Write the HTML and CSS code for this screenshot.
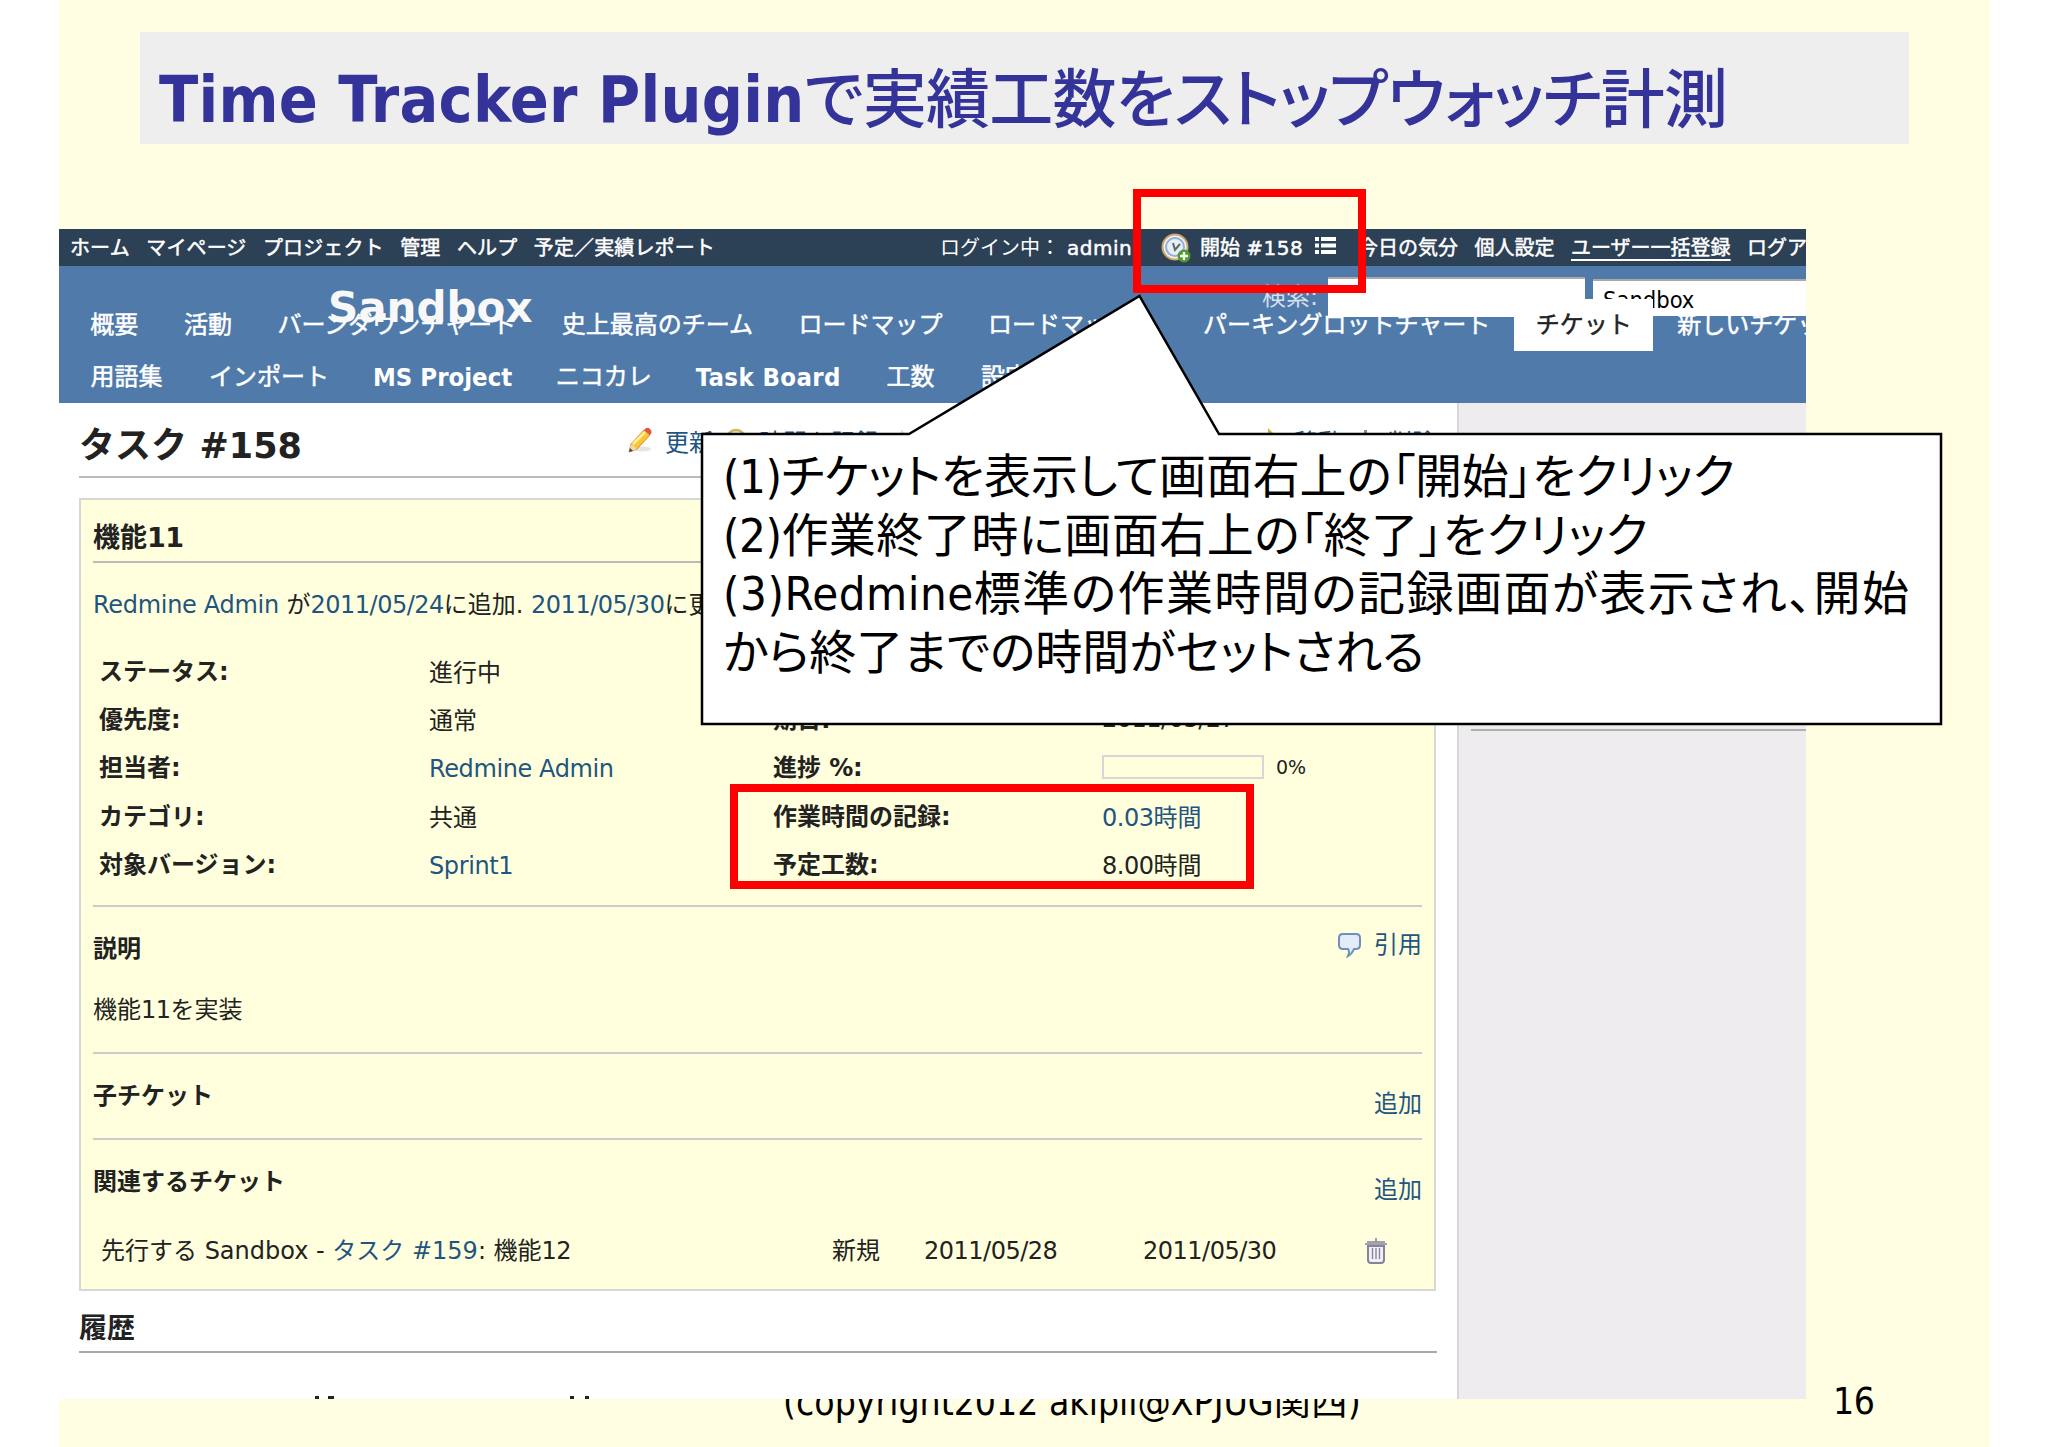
FILE: index.html
```html
<!DOCTYPE html>
<html lang="ja">
<head>
    <meta charset="UTF-8">
    <meta name="viewport" content="width=device-width, initial-scale=1.0">
    <title>Time Tracker Pluginで実績工数をストップウォッチ計測</title>
    <link rel="stylesheet" href="styles.css">
</head>
<body>
    <div class="slide">
        <h1 class="slide-title"><span class="title-en">Time Tracker Plugin</span><span class="title-ja">で実績工数をストップウォッチ計測</span></h1>

        <div class="redmine">
            <div class="top-menu">
                <div class="menu-left">
                    <a>ホーム</a><a>マイページ</a><a>プロジェクト</a><a>管理</a><a>ヘルプ</a><a>予定／実績レポート</a>
                </div>
                <div class="menu-user"><span>ログイン中：</span><a class="latin">admin</a></div>
                <div class="menu-tracker">
                    <svg class="icon-timer" width="30" height="30" viewBox="0 0 30 30">
                        <circle cx="14" cy="14" r="12.5" fill="#f4f1e4" stroke="#c9a66b" stroke-width="2"/>
                        <circle cx="14" cy="14" r="9" fill="#e6eefa" stroke="#8fb0de" stroke-width="2"/>
                        <path d="M12 10l2 7 5-6" fill="none" stroke="#5b6b60" stroke-width="2"/>
                        <circle cx="23" cy="23" r="6.5" fill="#4f9a2c"/>
                        <path d="M23 19v8M19 23h8" stroke="#fff" stroke-width="2.4"/>
                    </svg>
                    <a>開始 <span class="ticket-no">#158</span></a>
                    <svg class="icon-list" width="21" height="17" viewBox="0 0 21 17">
                        <path d="M0 2h4M6 2h15M0 8.500h4M6 8.500h15M0 15h4M6 15h15" stroke="#fff" stroke-width="4"/>
                    </svg>
                </div>
                <div class="menu-account">
                    <a>今日の気分</a><a>個人設定</a><a class="underlined">ユーザー一括登録</a><a>ログアウト</a>
                </div>
            </div>

            <div class="header">
                <div class="project-name">Sandbox</div>
                <div class="quick-search">
                    <label>検索:</label>
                    <div class="search-box"></div>
                    <div class="project-select">Sandbox</div>
                </div>
                <div class="main-menu">
                    <div class="tabs">
                        <a>概要</a><a>活動</a><a>バーンダウンチャート</a><a>史上最高のチーム</a><a>ロードマップ</a><a class="roadmap-wide">ロードマップ</a><a>パーキングロットチャート</a><a class="selected">チケット</a><a>新しいチケット</a>
                    </div>
                    <div class="tabs tabs-second">
                        <a>用語集</a><a>インポート</a><a class="tab-latin">MS Project</a><a>ニコカレ</a><a class="tab-latin tab-board">Task Board</a><a>工数</a><a>設定</a>
                    </div>
                </div>
            </div>

            <div class="main">
                <div class="content">
                    <div class="heading">
                        <h2>タスク <span class="latin">#158</span></h2>
                        <div class="actions">
                            <svg width="25" height="26" viewBox="0 0 25 26">
                                <ellipse cx="14" cy="22" rx="9" ry="2.500" fill="#e4e4e4"/>
                                <path d="M1 25l2-8L16 3l6 5L9 22z" fill="#f9c63a" stroke="#d98e1c" stroke-width="1"/>
                                <path d="M5 17L17 5" stroke="#fff0a0" stroke-width="2.500"/>
                                <path d="M16 3q3-4 6-1t0 6z" fill="#e0524a"/>
                                <path d="M1 25l2-8 6 5z" fill="#efd9b4"/><path d="M1 25l1-4 3 3z" fill="#444"/>
                            </svg>
                            <a>更新</a>
                            <svg width="22" height="24" viewBox="0 0 22 24"><circle cx="11" cy="11" r="9" fill="#f6f1dc" stroke="#d0b060" stroke-width="2.500"/></svg>
                            <a>時間を記録</a>
                            <svg width="22" height="24" viewBox="0 0 22 24"><path d="M11 1l3 7 7 1-5 5 1 8-6-4-6 4 1-8-5-5 7-1z" fill="#ddd"/></svg>
                        </div>
                        <div class="actions actions-right">
                            <svg width="22" height="24" viewBox="0 0 22 24"><path d="M8 0l10 10-10 10z" fill="#d9b23c"/></svg>
                            <a>移動</a>
                            <svg width="22" height="24" viewBox="0 0 22 24"><path d="M10 2h3v3h7v3H3V5h7z" fill="#889"/></svg>
                            <a>削除</a>
                        </div>
                    </div>

                    <div class="issue">
                        <h3>機能<span class="latin">11</span></h3>
                        <p class="author"><a class="latin">Redmine Admin</a> が<a class="latin">2011/05/24</a>に追加. <a class="latin">2011/05/30</a>に更新.</p>
                        <div class="attributes">
                            <b>ステータス:</b><span>進行中</span><b>開始日:</b><span class="latin">2011/05/24</span>
                            <b>優先度:</b><span>通常</span><b>期日:</b><span class="latin">2011/05/27</span>
                            <b>担当者:</b><span class="value-link"><a class="latin">Redmine Admin</a></span><b>進捗 <span class="latin">%</span>:</b><span class="progress"><i></i><small>0%</small></span>
                            <b>カテゴリ:</b><span>共通</span><b>作業時間の記録:</b><span><a><span class="latin">0.03</span>時間</a></span>
                            <b>対象バージョン:</b><span class="value-link"><a class="latin">Sprint1</a></span><b>予定工数:</b><span><span class="latin">8.00</span>時間</span>
                        </div>

                        <div class="section description">
                            <div class="section-head">
                                <b>説明</b>
                                <a class="quote">
                                    <svg width="25" height="26" viewBox="0 0 25 26"><path d="M6 2h13q4 0 4 4v7q0 4-4 4h-2q-2 5-6 7 2-4 0-7H6q-4 0-4-4V6q0-4 4-4z" fill="#e3ecf8" stroke="#6f8fbd" stroke-width="2"/></svg>
                                    引用
                                </a>
                            </div>
                            <p>機能<span class="latin">11</span>を実装</p>
                        </div>
                        <div class="section">
                            <div class="section-head"><b>子チケット</b><a class="add">追加</a></div>
                        </div>
                        <div class="section related">
                            <div class="section-head"><b>関連するチケット</b><a class="add">追加</a></div>
                            <div class="relation">
                                <span>先行する Sandbox - <a>タスク #159</a>: 機能<span class="latin">12</span></span>
                                <span>新規</span>
                                <span class="latin">2011/05/28</span>
                                <span class="latin">2011/05/30</span>
                                <svg width="24" height="26" viewBox="0 0 24 26"><path d="M12 0v4M1 6h22M3 4h18" stroke="#85839a" stroke-width="1.500" fill="none"/><path d="M4 8v14q0 3 3 3h10q3 0 3-3V8z" fill="#f1eff4" stroke="#85839a" stroke-width="2"/><path d="M8.500 10v11M12 10v11M15.500 10v11" stroke="#85839a" stroke-width="1.300"/></svg>
                            </div>
                        </div>
                    </div>

                    <h3 class="history">履歴</h3>
                    <!-- first journal entry, cut off by the bottom of the window -->
                    <svg class="journal" width="300" height="3" viewBox="0 0 300 3"><path d="M1 1.500h4M14 1.500h6M256 1.500h4M271 1.500h4" stroke="#222" stroke-width="3"/></svg>
                </div>
                <div class="sidebar"></div>
            </div>
        </div>

        <div class="footer">
            <span class="copyright">(copyright2012 akipii@XPJUG関西)</span>
            <span class="page-number">16</span>
        </div>

        <div class="frame frame-timer"></div>
        <div class="frame frame-hours"></div>

        <div class="callout">
            <svg width="1243" height="434" viewBox="0 0 1243 434">
                <path d="M2 140H209L439.500 2L519 140H1241V430H2z" fill="#fff" stroke="#000" stroke-width="2.500"/>
            </svg>
            <div class="callout-text">
                <div class="line1"><span class="callout-latin">(1)</span>チケットを表示して画面右上の「開始」をクリック</div>
                <div class="line2"><span class="callout-latin">(2)</span>作業終了時に画面右上の「終了」をクリック</div>
                <div class="line3"><span class="callout-latin">(3)Redmine</span>標準の作業時間の記録画面が表示され、開始</div>
                <div>から終了までの時間がセットされる</div>
            </div>
        </div>
    </div>
</body>
</html>
```
FILE: styles.css
```css
* {
    margin: 0;
    padding: 0;
    box-sizing: border-box;
}

body {
    background: #fff;
    font-family: 'DejaVu Sans', 'Noto Sans CJK JP', sans-serif;
    color: #222;
}

.slide {
    position: relative;
    width: 1931px;
    height: 1447px;
    margin-left: 59px;
    padding-top: 32px;
    background: #fffde2;
    overflow: hidden;
}

.slide-title {
    display: flex;
    align-items: center;
    width: 1769px;
    height: 112px;
    margin-left: 81px;
    padding: 24px 0 0 19px;
    background: #eee;
    color: #333399;
    font-family: 'DejaVu Sans Condensed', 'Noto Sans', 'Noto Sans CJK JP', sans-serif;
    font-size: 64px;
    line-height: 80px;
    white-space: nowrap;
}

.title-en {
    letter-spacing: 0.25px;
}

.title-ja {
    font-weight: 500;
    font-feature-settings: 'palt';
    letter-spacing: -0.75px;
}

/* Redmine window */
.redmine {
    position: relative;
    z-index: 1;
    width: 1747px;
    height: 1170px;
    margin-top: 85px;
    overflow: hidden;
    background: #fff;
    font-size: 24px;
    white-space: nowrap;
}

.top-menu {
    display: flex;
    align-items: center;
    height: 37px;
    padding-left: 11px;
    background: #2c4056;
    color: #fff;
    font-size: 20px;
    line-height: 36px;
}

.top-menu > div {
    flex-shrink: 0;
}

.top-menu a {
    -webkit-text-stroke: 0.5px #fff;
}

.menu-left {
    display: flex;
    gap: 16.5px;
    width: 870px;
    letter-spacing: 0.12px;
}

.menu-user {
    display: flex;
    width: 221px;
    gap: 7px;
}

.menu-user .latin {
    letter-spacing: 0.5px;
}

.menu-tracker {
    display: flex;
    align-items: center;
    width: 197px;
}

.ticket-no {
    letter-spacing: 0.5px;
}

.icon-timer {
    margin-right: 9px;
}

.icon-list {
    margin: -4px 0 0 12px;
}

.menu-account {
    display: flex;
    gap: 16.5px;
}

.underlined {
    text-decoration: underline;
    text-underline-offset: 4px;
}

.header {
    position: relative;
    height: 137px;
    padding-top: 33px;
    background: #507aaa;
    color: #fff;
}

.project-name {
    position: absolute;
    left: 269px;
    top: 17px;
    color: #f8f8f8;
    font-size: 42px;
    font-weight: bold;
    line-height: 50px;
}

.quick-search {
    position: absolute;
    z-index: 1;
    left: 1203px;
    top: 11px;
    display: flex;
    align-items: flex-start;
}

.quick-search label {
    width: 66px;
    padding-top: 3px;
    color: #d5e0ec;
    line-height: 34px;
}

.search-box {
    width: 257px;
    height: 40px;
    margin-right: 8px;
    background: #fff;
    border-top: 2px solid #a9a9a9;
}

.project-select {
    width: 230px;
    height: 37px;
    margin-top: 2px;
    padding-left: 10px;
    background: #fff;
    border-top: 2px solid #a9a9a9;
    color: #000;
    font-family: 'DejaVu Sans Condensed', 'Noto Sans', sans-serif;
    font-size: 23.5px;
    line-height: 38px;
}

.tabs {
    display: flex;
    gap: 3px;
    padding-left: 10px;
}

.tabs a {
    flex-shrink: 0;
    height: 52px;
    padding: 0 21.3px;
    line-height: 53px;
    -webkit-text-stroke: 0.5px currentColor;
}

.tabs-second a {
    padding: 0 22px 0 21.5px;
}

.tabs .tab-latin {
    padding: 0 19px;
    font-family: 'DejaVu Sans Condensed', 'Noto Sans', sans-serif;
    font-size: 25.5px;
    font-weight: bold;
    -webkit-text-stroke: 0;
}

.tabs .tab-board {
    padding-right: 21px;
    letter-spacing: 0.4px;
}

.tabs .roadmap-wide {
    width: 212px;
}

.tabs .selected {
    position: relative;
    z-index: 2;
    background: #fff;
    color: #222;
}

.main {
    display: flex;
    height: 996px;
}

.content {
    width: 1398px;
    padding: 0 20px;
    background: #fff;
}

.sidebar {
    flex: 1;
    padding: 326px 0 0 12px;
    background: #eeecef;
    border-left: 2px solid #d7d7d7;
}

.sidebar::before {
    content: '';
    display: block;
    height: 2px;
    background: #b0b0b0;
}

.content a {
    color: #1f5580;
}

.content .latin {
    letter-spacing: -0.5px;
}

.heading {
    display: flex;
    align-items: center;
    width: 1357px;
    height: 75px;
    border-bottom: 2px solid #bbb;
}

.heading h2 {
    width: 549px;
    padding-top: 4px;
    font-size: 36px;
}

.heading h2 .latin {
    font-size: 35px;
    letter-spacing: 0;
}

.actions {
    display: flex;
    align-items: center;
    gap: 12px;
    padding-top: 1px;
}

.actions-right {
    flex: 1;
    justify-content: flex-end;
}

.issue {
    width: 1357px;
    height: 793px;
    margin-top: 20px;
    padding: 0 12px;
    background: #ffffdd;
    border: 2px solid #d7d7d7;
}

.issue h3 {
    height: 63px;
    padding-top: 18px;
    border-bottom: 2px solid #bbb;
    font-size: 27px;
    line-height: 40px;
}

.author {
    margin-top: 22px;
    line-height: 40px;
}

.author a:first-child {
    letter-spacing: -0.3px;
}

.attributes {
    display: grid;
    grid-template-columns: 330px 344px 329px 1fr;
    grid-auto-rows: 48.3px;
    align-items: center;
    margin-top: 20px;
    padding-left: 6px;
}

.attributes > span {
    padding-top: 3px;
}

.attributes .value-link {
    padding-top: 7px;
}

.value-link .latin {
    letter-spacing: -0.4px;
}

.progress {
    display: flex;
    align-items: center;
    gap: 12px;
}

.progress i {
    width: 162px;
    height: 24px;
    border: 2px solid #d7d7d7;
}

.progress small {
    font-size: 19px;
}

.section {
    height: 86px;
    padding-top: 22px;
    border-top: 2px solid #ccc;
}

.description {
    height: 147px;
    margin-top: 19px;
}

.section-head {
    display: flex;
    justify-content: space-between;
    line-height: 40px;
}

.quote {
    display: flex;
    align-items: center;
    gap: 12px;
    margin-top: -8px;
}

.add {
    margin-top: 8px;
}

.description p {
    margin-top: 21px;
    line-height: 40px;
}

.relation {
    display: grid;
    grid-template-columns: 731px 92px 219px 221px 1fr;
    align-items: center;
    margin-top: 21px;
    padding-left: 8px;
    line-height: 40px;
}

.history {
    height: 62px;
    padding-top: 18px;
    border-bottom: 2px solid #aaa;
    font-size: 28px;
    line-height: 40px;
}

.journal {
    display: block;
    margin: 43px 0 0 235px;
}

.footer {
    display: flex;
    align-items: center;
    height: 60px;
    margin-top: -30px;
    padding-left: 724px;
    color: #000;
    font-family: 'DejaVu Sans Condensed', 'Noto Sans', 'Noto Sans CJK JP', sans-serif;
    font-size: 37px;
    white-space: nowrap;
}

.copyright {
    width: 1050px;
}

.page-number {
    padding-top: 5px;
    letter-spacing: -0.5px;
}

/* annotations over the window */
.frame {
    position: absolute;
    z-index: 2;
    border: 8px solid #f00;
}

.frame-timer {
    left: 1074px;
    top: 189px;
    width: 233px;
    height: 104px;
}

.frame-hours {
    left: 671px;
    top: 784px;
    width: 524px;
    height: 105px;
}

.callout {
    position: absolute;
    z-index: 2;
    left: 641px;
    top: 294px;
}

.callout svg {
    display: block;
}

.callout-text {
    position: absolute;
    left: 23px;
    top: 154px;
    color: #000;
    font-family: 'DejaVu Sans Condensed', 'Noto Sans', 'Noto Sans CJK JP', sans-serif;
    font-size: 47px;
    line-height: 58.5px;
    font-feature-settings: 'palt';
    white-space: nowrap;
}

.line1 {
    letter-spacing: -0.15px;
}

.line2 {
    letter-spacing: 0.45px;
}

.line3 {
    letter-spacing: 1.45px;
}

.callout-latin {
    letter-spacing: -0.5px;
}

.line3 .callout-latin {
    letter-spacing: 0.5px;
}
```
